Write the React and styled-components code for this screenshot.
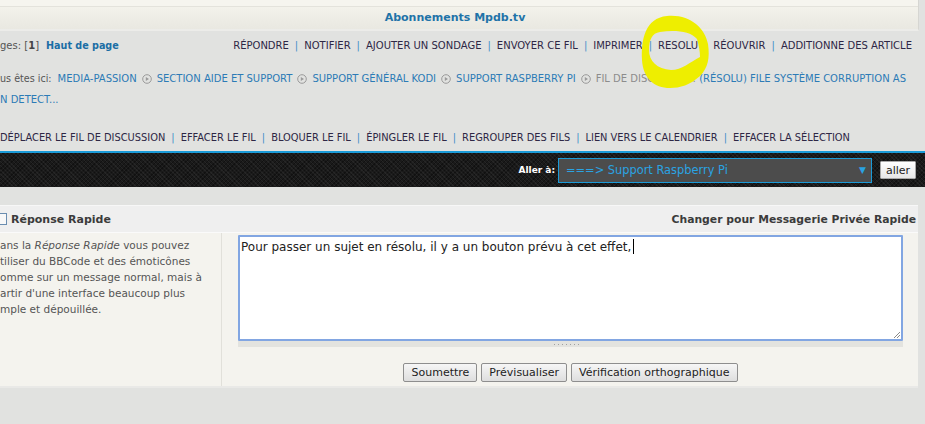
import React from 'react'
import styled, { createGlobalStyle } from 'styled-components'

const Global = createGlobalStyle`
  html, body {
    margin: 0;
    padding: 0;
    background: #e1e2e0;
    overflow: hidden;
  }
  body {
    font-family: "DejaVu Sans", Verdana, sans-serif;
    color: #333;
  }
`

const Page = styled.div`
  position: relative;
  width: 925px;
  height: 424px;
  overflow: hidden;
`

const HeaderBox = styled.div`
  width: 918px;
  border-right: 1px solid #d6d6d2;
  border-bottom: 2px solid #ecece9;
`
const TopStrip = styled.div`
  height: 6px;
  background: #f6f5ef;
  border-bottom: 1px solid #e4e3dc;
`
const TitleBar = styled.div`
  height: 22px;
  line-height: 22px;
  text-align: center;
  padding-right: 8px;
  background: linear-gradient(#f3f2eb, #e9e8e1);
  color: #1f73a8;
  font-weight: bold;
  font-size: 11px;
`

const NavRow = styled.div`
  display: flex;
  justify-content: space-between;
  align-items: center;
  height: 20px;
  margin-top: 4px;
  padding-right: 13px;
`
const PageInfo = styled.div`
  color: #555;
  font-size: 10px;
  white-space: nowrap;
  b { color: #444; }
`
const TopLink = styled.span`
  color: #1b6ea5;
  font-weight: bold;
  font-size: 9.6px;
  margin-left: 7px;
`
const LinkList = styled.div`
  display: flex;
  align-items: center;
  font-size: ${p => p.size || 10}px;
  white-space: nowrap;
`
const NavItem = styled.span`
  color: #2e2745;
  text-transform: uppercase;
`
const Sep = styled.span`
  color: #3f8ec8;
  margin: 0 ${p => p.gap || 6}px;
`

const Crumbs = styled.div`
  margin-top: 13px;
  font-size: 10px;
  line-height: 21px;
  white-space: nowrap;
`
const CrumbLine = styled.div`
  display: flex;
  align-items: center;
`
const CrumbLabel = styled.span`
  color: #555;
  font-size: 9.6px;
  margin-right: 6px;
`
const Crumb = styled.span`
  color: ${p => (p.current ? '#8c8c8c' : '#2c7bb6')};
  text-transform: uppercase;
`
const CrumbArrow = styled.svg`
  margin: 0 5px;
  flex: none;
`

const ModRow = styled(LinkList)`
  margin-top: 17px;
  height: 20px;
`

const JumpBar = styled.div`
  margin-top: 4px;
  height: 34px;
  border-top: 2px solid #1b9bd8;
  background-color: #1a1a1a;
  background-image:
    repeating-linear-gradient(45deg, rgba(255,255,255,0.05) 0 1px, transparent 1px 3px),
    repeating-linear-gradient(-45deg, rgba(0,0,0,0.35) 0 1px, transparent 1px 3px);
  display: flex;
  align-items: center;
  justify-content: flex-end;
  padding-right: 9px;
`
const JumpLabel = styled.span`
  color: #fff;
  font-weight: bold;
  font-size: 9px;
  margin-right: 3px;
`
const Select = styled.div`
  width: 300px;
  height: 23px;
  border: 1px solid #1b9bd8;
  background: #4c4c4c;
  color: #2aa3e2;
  font-size: 11.4px;
  display: flex;
  align-items: center;
  justify-content: space-between;
  padding: 0 5px 0 7px;
`
const Caret = styled.span`
  font-size: 9px;
  color: #2aa3e2;
`
const GoButton = styled.button`
  margin-left: 8px;
  width: 36px;
  height: 18px;
  padding: 0;
  font-family: inherit;
  font-size: 11px;
  color: #222;
  border: 1px solid #a8a8a8;
  background: linear-gradient(#ffffff, #e6e6e6);
  border-radius: 1px;
`

const Panel = styled.div`
  margin-top: 18px;
  width: 918px;
  border-top: 1px solid #f7f7f7;
  border-bottom: 2px solid #e9e9e7;
`
const PanelHead = styled.div`
  height: 26px;
  display: flex;
  align-items: center;
  justify-content: space-between;
  padding-right: 2px;
  background: #efefef;
  border-bottom: 1px solid #fafafa;
  color: #3b3b3b;
  font-weight: bold;
  font-size: 11px;
`
const HeadTitle = styled.span`
  display: flex;
  align-items: center;
  gap: 4px;
`
const HeadRight = styled.span`
  font-size: 10.8px;
`
const Toggle = styled.span`
  width: 9px;
  height: 10px;
  margin-left: -4px;
  border: 1px solid #6a8db0;
  background: #f8f8f8;
`
const PanelBody = styled.div`
  display: flex;
  background: #f4f3ee;
  height: 153px;
`
const LeftCol = styled.div`
  width: 221px;
  border-right: 1px solid #e1e0da;
  padding-top: 4px;
  font-size: 10.5px;
  line-height: 16px;
  color: #555;
  white-space: nowrap;
  em { font-style: italic; }
`
const RightCol = styled.div`
  flex: 1;
  padding: 2px 15px 0 16px;
  display: flex;
  flex-direction: column;
`
const TextBox = styled.div`
  position: relative;
  height: 98px;
  border: 2px solid #82a6e2;
  border-radius: 1px;
  background: #fff;
  padding: 2px 1px;
  font-size: 12px;
  line-height: 16px;
  color: #222;
`
const TypeCaret = styled.span`
  display: inline-block;
  width: 1px;
  height: 15px;
  margin-left: 2px;
  background: #000;
  vertical-align: -3px;
`
const Grip = styled.svg`
  position: absolute;
  right: 0;
  bottom: 0;
`
const ResizeStrip = styled.div`
  height: 6px;
  background: #e3e3df;
  display: flex;
  justify-content: center;
  align-items: center;
  padding-right: 8px;
`
const Dots = styled.span`
  width: 25px;
  height: 1px;
  background: repeating-linear-gradient(90deg, #a0a0a0 0 1px, transparent 1px 4px);
`
const Buttons = styled.div`
  display: flex;
  justify-content: center;
  gap: 4px;
  margin-top: 16px;
`
const Button = styled.button`
  height: 19px;
  padding: 0 7px;
  font-family: inherit;
  font-size: 11px;
  color: #222;
  border: 1px solid #8e8e8e;
  border-radius: 2px;
  background: linear-gradient(#f6f6f6, #dedede);
`

const Highlight = styled.svg`
  position: absolute;
  left: 0;
  top: 0;
  pointer-events: none;
`

const navItems = ['Répondre', 'Notifier', 'Ajouter un sondage', 'Envoyer ce fil', 'Imprimer', 'Resolu', 'Réouvrir', 'Additionne des article']
const modItems = ['Déplacer le fil de discussion', 'Effacer le fil', 'Bloquer le fil', 'Épingler le fil', 'Regrouper des fils', 'Lien vers le calendrier', 'Effacer la sélection']

function Arrow() {
  return (
    <CrumbArrow width="10" height="10" viewBox="0 0 10 10">
      <circle cx="5" cy="5" r="4.3" fill="none" stroke="#9a9a9a" strokeWidth="1" />
      <path d="M3.8 2.9 L7 5 L3.8 7.1 Z" fill="#9a9a9a" />
    </CrumbArrow>
  )
}

function Links({ items, size, gap, as }) {
  const List = as || LinkList
  return (
    <List size={size}>
      {items.map((t, i) => (
        <React.Fragment key={t}>
          {i > 0 && <Sep gap={gap}>|</Sep>}
          <NavItem>{t}</NavItem>
        </React.Fragment>
      ))}
    </List>
  )
}

export default function App() {
  return (
    <Page>
      <Global />
      <HeaderBox>
        <TopStrip />
        <TitleBar>Abonnements Mpdb.tv</TitleBar>
      </HeaderBox>

      <NavRow>
        <PageInfo>
          ges: [<b>1</b>]<TopLink>Haut de page</TopLink>
        </PageInfo>
        <Links items={navItems} />
      </NavRow>

      <Crumbs>
        <CrumbLine>
          <CrumbLabel>us êtes ici:</CrumbLabel>
          <Crumb>Media-Passion</Crumb>
          <Arrow />
          <Crumb>Section Aide et Support</Crumb>
          <Arrow />
          <Crumb>Support Général Kodi</Crumb>
          <Arrow />
          <Crumb>Support Raspberry Pi</Crumb>
          <Arrow />
          <Crumb current>Fil de discussion:&nbsp;</Crumb>
          <Crumb>(Résolu) File système corruption as</Crumb>
        </CrumbLine>
        <CrumbLine>
          <Crumb>n detect...</Crumb>
        </CrumbLine>
      </Crumbs>

      <Links items={modItems} size={9.85} gap={6} as={ModRow} />

      <JumpBar>
        <JumpLabel>Aller à:</JumpLabel>
        <Select>
          <span>===&gt; Support Raspberry Pi</span>
          <Caret>▼</Caret>
        </Select>
        <GoButton>aller</GoButton>
      </JumpBar>

      <Panel>
        <PanelHead>
          <HeadTitle>
            <Toggle />
            Réponse Rapide
          </HeadTitle>
          <HeadRight>Changer pour Messagerie Privée Rapide</HeadRight>
        </PanelHead>
        <PanelBody>
          <LeftCol>
            ans la <em>Réponse Rapide</em> vous pouvez<br />
            tiliser du BBCode et des émoticônes<br />
            omme sur un message normal, mais à<br />
            artir d'une interface beaucoup plus<br />
            mple et dépouillée.
          </LeftCol>
          <RightCol>
            <TextBox>
              Pour passer un sujet en résolu, il y a un bouton prévu à cet effet,
              <TypeCaret />
              <Grip width="9" height="9" viewBox="0 0 9 9">
                <path d="M8 2 L2 8 M8 5 L5 8" stroke="#8a8a8a" strokeWidth="1" />
              </Grip>
            </TextBox>
            <ResizeStrip>
              <Dots />
            </ResizeStrip>
            <Buttons>
              <Button>Soumettre</Button>
              <Button>Prévisualiser</Button>
              <Button>Vérification orthographique</Button>
            </Buttons>
          </RightCol>
        </PanelBody>
      </Panel>

      <Highlight width="925" height="424" viewBox="0 0 925 424">
        <path
          fillRule="evenodd"
          fill="#eeee00"
          d="M667 16 C690 14 705 28 708 44 C710 58 708 68 700 76 C690 85 680 88 670 88 C654 88 643 78 642 60 C641 40 645 18 667 16 Z
             M660 32 C675 30 690 31 697 39 C699 46 700 52 700 57 C690 62 682 70 671 70 C657 69 649 61 649 50 C649 40 652 33 660 32 Z"
        />
      </Highlight>
    </Page>
  )
}
